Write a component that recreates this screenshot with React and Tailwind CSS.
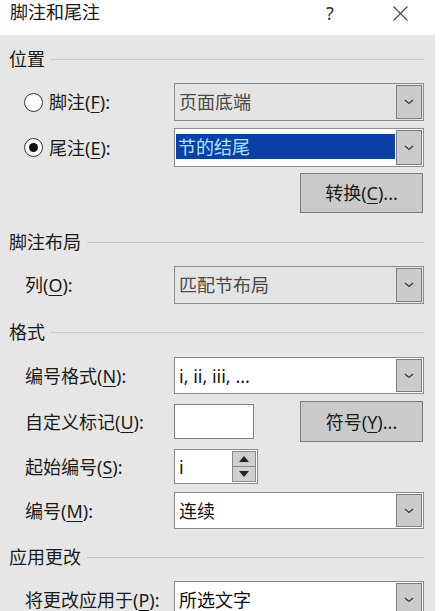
import React from "react";

const U = ({ children }) => (
  <span className="underline underline-offset-[3px] decoration-1">{children}</span>
);

const Chevron = () => (
  <svg width="10" height="6" viewBox="0 0 10 6" className="block">
    <path d="M1 1 L5 4.5 L9 1" fill="none" stroke="#3a3a3a" strokeWidth="1.3" />
  </svg>
);

const Header = ({ text, mt }) => (
  <div className={`flex items-center h-[24px] pl-[9px] pr-[11px] ${mt}`}>
    <span className="text-[18px] leading-none text-[#1b1b1b]">{text}</span>
    <div className="flex-1 h-px bg-[#c9c9c9] ml-[6px]" />
  </div>
);

const Row = ({ label, children, mt, h }) => (
  <div className={`flex items-center pl-[25px] pr-[11px] ${mt} ${h}`}>
    <div className="w-[149px] text-[18px] leading-none text-[#1b1b1b] whitespace-nowrap">{label}</div>
    {children}
  </div>
);

const Select = ({ value, white, h }) => (
  <div
    className={`w-[250px] ${h} border border-[#8e8e8e] ${white ? "bg-white" : "bg-[#e4e4e4]"} flex items-stretch p-[1px]`}
  >
    <div className={`flex-1 flex items-center pl-[3px] text-[18px] leading-none ${white ? "text-[#111]" : "text-[#4a4a4a]"}`}>
      {value}
    </div>
    <div className="w-[26px] bg-[#cbcbcb] border border-[#7e7e7e] flex items-center justify-center">
      <Chevron />
    </div>
  </div>
);

const Radio = ({ checked }) => (
  <div className="w-[19px] h-[19px] rounded-full border border-[#333] bg-white flex items-center justify-center mr-[6px]">
    {checked && <div className="w-[9px] h-[9px] rounded-full bg-[#111]" />}
  </div>
);

const Btn = ({ children, h }) => (
  <div className={`w-[123px] ${h} bg-[#cacaca] border border-[#7c7c7c] flex items-center justify-center text-[18px] leading-none text-[#1b1b1b]`}>
    {children}
  </div>
);

export default function App() {
  return (
    <div className="w-[440px] h-[611px] bg-white overflow-hidden font-['Noto_Sans','Noto_Sans_CJK_SC',sans-serif] flex flex-col">
      <div className="h-[35px] shrink-0 flex items-start relative">
        <span className="ml-[10px] mt-[3px] text-[18px] leading-none text-[#1a1a1a]">脚注和尾注</span>
        <span className="absolute left-[326px] top-[4px] text-[18px] leading-none text-[#333]">?</span>
        <svg className="absolute left-[393px] top-[6px]" width="15" height="15" viewBox="0 0 15 15">
          <path d="M0.5 0.5 L14.5 14.5 M14.5 0.5 L0.5 14.5" stroke="#444" strokeWidth="1.1" />
        </svg>
      </div>
      <div className="flex-1 flex">
        <div className="w-[435px] bg-[#e6e6e6] flex flex-col">
          <Header text="位置" mt="mt-[12px]" />

          <div className="flex items-center pl-[24px] pr-[11px] mt-[12px] h-[38px]">
            <div className="w-[150px] flex items-center text-[18px] leading-none text-[#1b1b1b]">
              <Radio />
              <span>脚注(<U>F</U>):</span>
            </div>
            <Select value="页面底端" h="h-[38px]" />
          </div>

          <div className="flex items-center pl-[24px] pr-[11px] mt-[7px] h-[39px]">
            <div className="w-[150px] flex items-center text-[18px] leading-none text-[#1b1b1b]">
              <Radio checked />
              <span>尾注(<U>E</U>):</span>
            </div>
            <div className="w-[250px] h-[39px] border border-[#8e8e8e] bg-white flex items-stretch p-[1px]">
              <div className="flex-1 flex items-start pt-[4px] pr-[1px]">
                <div className="w-full h-[25px] bg-[#0a40a8] flex items-center pl-[2px] text-[18px] leading-none text-[#aee6ff]">
                  节的结尾
                </div>
              </div>
              <div className="w-[26px] bg-[#cbcbcb] border border-[#7e7e7e] flex items-center justify-center">
                <Chevron />
              </div>
            </div>
          </div>

          <div className="flex justify-end pr-[12px] mt-[6px]">
            <Btn h="h-[40px]">
              转换(<U>C</U>)...
            </Btn>
          </div>

          <Header text="脚注布局" mt="mt-[17px]" />

          <Row label={<span>列(<U>O</U>):</span>} mt="mt-[12px]" h="h-[38px]">
            <Select value="匹配节布局" h="h-[38px]" />
          </Row>

          <Header text="格式" mt="mt-[16px]" />

          <Row label={<span>编号格式(<U>N</U>):</span>} mt="mt-[13px]" h="h-[37px]">
            <Select value="i, ii, iii, ..." white h="h-[37px]" />
          </Row>

          <Row label={<span>自定义标记(<U>U</U>):</span>} mt="mt-[7px]" h="h-[41px]">
            <div className="w-[80px] h-[35px] bg-white border border-[#7e7e7e]" />
            <div className="flex-1 flex justify-end pr-[1px]">
              <Btn h="h-[41px]">
                符号(<U>Y</U>)...
              </Btn>
            </div>
          </Row>

          <Row label={<span>起始编号(<U>S</U>):</span>} mt="mt-[7px]" h="h-[35px]">
            <div className="w-[84px] h-[35px] bg-white border border-[#8e8e8e] flex items-stretch p-[1px]">
              <div className="flex-1 flex items-center pl-[3px] text-[18px] leading-none text-[#111]">i</div>
              <div className="w-[24px] flex flex-col border border-[#8a8a8a] bg-[#cfcfcf]">
                <div className="flex-1 flex items-center justify-center border-b border-[#8a8a8a]">
                  <svg width="10" height="6" viewBox="0 0 10 6"><path d="M0 6 L5 0 L10 6 Z" fill="#222" /></svg>
                </div>
                <div className="flex-1 flex items-center justify-center">
                  <svg width="10" height="6" viewBox="0 0 10 6"><path d="M0 0 L5 6 L10 0 Z" fill="#222" /></svg>
                </div>
              </div>
            </div>
          </Row>

          <Row label={<span>编号(<U>M</U>):</span>} mt="mt-[8px]" h="h-[37px]">
            <Select value="连续" white h="h-[37px]" />
          </Row>

          <Header text="应用更改" mt="mt-[16px]" />

          <Row label={<span>将更改应用于(<U>P</U>):</span>} mt="mt-[12px]" h="h-[38px]">
            <Select value="所选文字" white h="h-[38px]" />
          </Row>
        </div>
        <div className="flex-1 bg-white" />
      </div>
    </div>
  );
}
